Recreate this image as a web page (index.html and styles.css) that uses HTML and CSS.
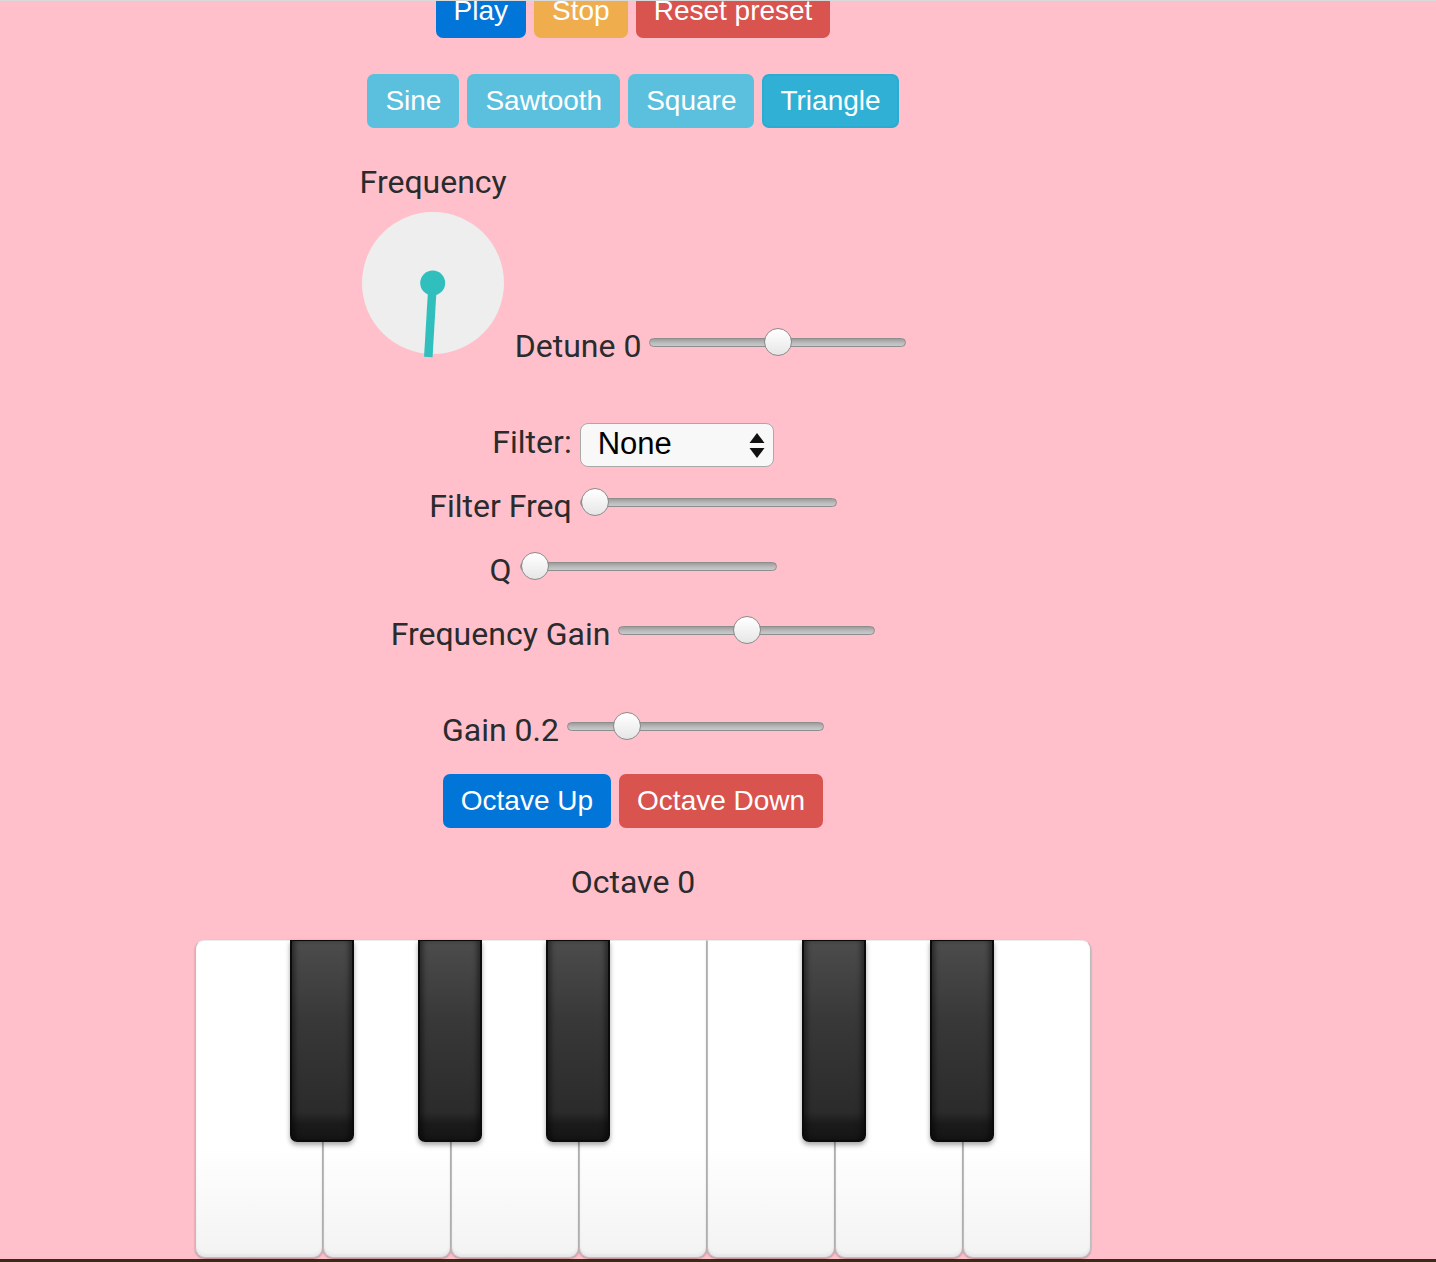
FILE: index.html
```html
<!DOCTYPE html>
<html lang="en">
<head>
<meta charset="utf-8">
<title>Synth</title>
<link rel="stylesheet" href="styles.css">
</head>
<body>
<div class="topline"></div>
<main class="app">
  <div class="btn-row top-row">
    <button class="btn btn-primary">Play</button>
    <button class="btn btn-warning">Stop</button>
    <button class="btn btn-danger">Reset preset</button>
  </div>

  <div class="btn-row wave-row">
    <button class="btn btn-info">Sine</button>
    <button class="btn btn-info">Sawtooth</button>
    <button class="btn btn-info">Square</button>
    <button class="btn btn-info active">Triangle</button>
  </div>

  <div class="ctrl-row knob-row">
    <div class="knob-block">
      <div class="label">Frequency</div>
      <svg class="knob" width="144" height="146" viewBox="0 0 144 146">
        <circle cx="73" cy="71" r="71" fill="#eeeeee"/>
        <line x1="72.7" y1="71" x2="68.3" y2="145" stroke="#30bfbd" stroke-width="8.5"/>
        <circle cx="72.7" cy="71" r="12.5" fill="#30bfbd"/>
      </svg>
    </div>
    <span class="label">Detune 0</span>
    <input class="slider" type="range" min="-1200" max="1200" value="0">
  </div>

  <div class="ctrl-row filter-row">
    <span class="label">Filter:</span>
    <span class="select-wrap">
      <select class="select">
        <option>None</option>
        <option>Lowpass</option>
        <option>Highpass</option>
        <option>Bandpass</option>
      </select>
      <svg class="select-arrows" width="16" height="26" viewBox="0 0 16 26">
        <polygon points="8,0 15.5,10 0.5,10" fill="#111"/>
        <polygon points="0.5,15 15.5,15 8,25" fill="#111"/>
      </svg>
    </span>
  </div>

  <div class="ctrl-row row64">
    <span class="label">Filter Freq</span>
    <input class="slider" type="range" min="0" max="100" value="0">
  </div>

  <div class="ctrl-row row64">
    <span class="label">Q</span>
    <input class="slider" type="range" min="0" max="100" value="0">
  </div>

  <div class="ctrl-row row64">
    <span class="label">Frequency Gain</span>
    <input class="slider" type="range" min="-40" max="40" value="0">
  </div>

  <div class="ctrl-row row96">
    <span class="label">Gain 0.2</span>
    <input class="slider" type="range" min="0" max="1" step="0.01" value="0.2">
  </div>

  <div class="btn-row octave-row">
    <button class="btn btn-primary">Octave Up</button>
    <button class="btn btn-danger">Octave Down</button>
  </div>

  <div class="octave-label label">Octave 0</div>

  <div class="piano">
    <div class="white-key first"></div>
    <div class="white-key"></div>
    <div class="white-key"></div>
    <div class="white-key"></div>
    <div class="white-key"></div>
    <div class="white-key"></div>
    <div class="white-key last"></div>
    <div class="black-key" style="left:95px"></div>
    <div class="black-key" style="left:223px"></div>
    <div class="black-key" style="left:351px"></div>
    <div class="black-key" style="left:607px"></div>
    <div class="black-key" style="left:735px"></div>
  </div>

  <div class="floor"></div>
</main>
</body>
</html>
```

FILE: styles.css
```css
html {
  overflow: hidden;
}

body {
  margin: 0;
  background: #ffc0cb;
  font-family: Roboto, "Liberation Sans", Arial, sans-serif;
  color: #292b2c;
}

.topline {
  position: fixed;
  top: 0;
  left: 0;
  right: 0;
  height: 1px;
  background: #d9d9d9;
  z-index: 5;
}

.app {
  width: 1266px;
  margin-top: -16px;
  display: flex;
  flex-direction: column;
  align-items: center;
}

/* buttons */
.btn-row {
  display: flex;
  gap: 8px;
}

.wave-row {
  margin-top: 36px;
}

.octave-row {
  margin-top: 28px;
}

.btn {
  font-family: "Liberation Sans", Arial, Helvetica, sans-serif;
  font-size: 28px;
  line-height: 40px;
  padding: 5px 16px 5px;
  border: 2px solid transparent;
  border-radius: 7px;
  color: #fff;
  cursor: pointer;
  white-space: nowrap;
}

.btn-primary {
  background: #0275d8;
  border-color: #0275d8;
}

.btn-warning {
  background: #f0ad4e;
  border-color: #f0ad4e;
}

.btn-danger {
  background: #d9534f;
  border-color: #d9534f;
}

.btn-info {
  background: #5bc0de;
  border-color: #5bc0de;
}

.btn-info.active {
  background: #31b0d5;
  border-color: #2aabd2;
}

/* control rows */
.label {
  font-size: 32px;
  line-height: 32px;
  white-space: nowrap;
}

.ctrl-row {
  display: flex;
  align-items: flex-end;
  gap: 8px;
}

.knob-row {
  margin-top: 38px;
}

.knob-block {
  display: flex;
  flex-direction: column;
  align-items: flex-start;
}

.knob {
  display: block;
  margin: 14px 0 4px 0;
}

.filter-row {
  height: 96px;
}

.row64 {
  height: 64px;
}

.row96 {
  height: 96px;
}

/* select */
.select-wrap {
  position: relative;
  display: block;
  margin-bottom: -9px;
}

.select {
  -webkit-appearance: none;
  appearance: none;
  display: block;
  box-sizing: border-box;
  width: 194px;
  height: 44px;
  margin: 0;
  padding: 0 0 3px 17px;
  border: 1.5px solid #a9a9a9;
  border-radius: 8px;
  background: #f8f8f8;
  color: #000;
  font-family: "Liberation Sans", Arial, Helvetica, sans-serif;
  font-size: 31px;
}

.select-arrows {
  position: absolute;
  right: 9px;
  top: 10px;
  pointer-events: none;
}

/* range sliders */
.slider {
  -webkit-appearance: none;
  appearance: none;
  width: 257px;
  height: 30px;
  margin: 0 0 5px;
  padding: 0;
  background: transparent;
}

.slider::-webkit-slider-runnable-track {
  box-sizing: border-box;
  height: 9px;
  border: 1px solid #8e8e8e;
  border-radius: 5px;
  background: linear-gradient(#9c9c9c, #bdbdbd 60%, #c9c9c9);
}

.slider::-webkit-slider-thumb {
  -webkit-appearance: none;
  appearance: none;
  box-sizing: border-box;
  width: 28px;
  height: 28px;
  margin-top: -10.5px;
  border: 1.5px solid #8a8a8a;
  border-radius: 50%;
  background: linear-gradient(#ffffff, #f3f3f3 50%, #e6e6e6);
}

/* octave label */
.octave-label {
  margin-top: 38px;
}

/* piano */
.piano {
  position: relative;
  align-self: flex-start;
  margin-left: 195px;
  margin-top: 42px;
  display: flex;
  width: 896px;
}

.white-key {
  box-sizing: border-box;
  width: 128px;
  height: 318px;
  background: linear-gradient(#ffffff 65%, #f3f3f3);
  border: 1px solid #bcbcbc;
  border-top: 1px solid #ececec;
  border-radius: 0 0 10px 10px;
  box-shadow: inset 0 -3px 3px rgba(0, 0, 0, 0.05), 0 1px 2px rgba(0, 0, 0, 0.3);
}

.white-key.first {
  border-top-left-radius: 9px;
}

.white-key.last {
  border-top-right-radius: 9px;
}

.black-key {
  position: absolute;
  top: 0;
  box-sizing: border-box;
  width: 64px;
  height: 202px;
  border: 2px solid #0b0b0b;
  border-top-width: 1px;
  border-radius: 0 0 7px 7px;
  background: linear-gradient(#4c4c4c, #383838 40%, #2b2b2b 86%, #1a1a1a 92%, #151515);
  box-shadow: inset 5px 0 5px -2px rgba(0, 0, 0, 0.45), inset -5px 0 5px -2px rgba(0, 0, 0, 0.45), 0 3px 5px rgba(0, 0, 0, 0.35);
}

.floor {
  align-self: stretch;
  width: 1436px;
  height: 60px;
  margin-top: 1px;
  background: #3b2a16;
}
```
